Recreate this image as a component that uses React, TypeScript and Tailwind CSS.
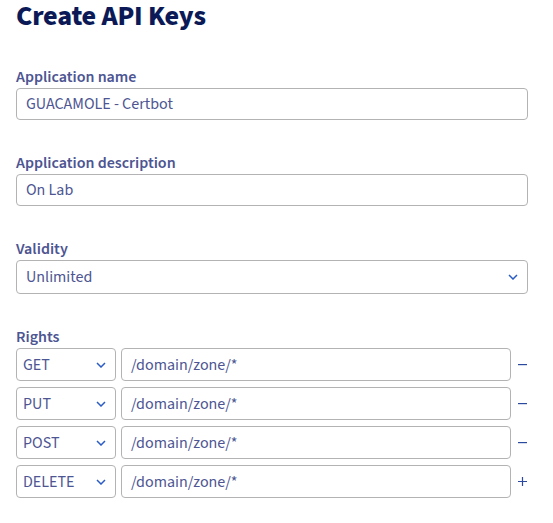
import React from "react";

function Chevron() {
  return (
    <svg width="10" height="6" viewBox="0 0 10 6" fill="none">
      <path d="M1 1l4 4 4-4" stroke="#2a5cc4" strokeWidth="1.5" />
    </svg>
  );
}

function Label({ children }: { children: React.ReactNode }) {
  return <label className="mb-[2px] text-[16px] font-semibold leading-[18px] text-[#4d5592]">{children}</label>;
}

function Field({ label, value }: { label: string; value: string }) {
  return (
    <div className="flex flex-col">
      <Label>{label}</Label>
      <div className="flex h-[32px] w-[512px] items-center rounded-[4px] border border-[#b3b3b3] px-[9px] text-[16px] text-[#4d5592]">
        {value}
      </div>
    </div>
  );
}

const rights = [
  { method: "GET", last: false },
  { method: "PUT", last: false },
  { method: "POST", last: false },
  { method: "DELETE", last: true },
];

export default function App() {
  return (
    <div className="h-[523px] w-[553px] bg-white pl-4 font-['Source_Sans_3','Lato',sans-serif]">
      <h1 className="text-[28px] font-extrabold leading-[32px] tracking-[-0.2px] text-[#0b1a57]">Create API Keys</h1>
      <div className="mt-[36px] flex flex-col gap-[34px]">
        <Field label="Application name" value="GUACAMOLE - Certbot" />
        <Field label="Application description" value="On Lab" />
        <div className="flex flex-col">
          <Label>Validity</Label>
          <div className="flex h-[34px] w-[512px] items-center justify-between rounded-[4px] border border-[#b3b3b3] pl-[9px] pr-[9px] text-[16px] text-[#4d5592]">
            <span>Unlimited</span>
            <Chevron />
          </div>
        </div>
        <div className="flex flex-col">
          <Label>Rights</Label>
          <div className="flex flex-col gap-[6px]">
            {rights.map((r) => (
              <div key={r.method} className="flex items-center">
                <div className="flex h-[33px] w-[100px] items-center justify-between rounded-[4px] border border-[#b3b3b3] pl-[6px] pr-[9px] text-[16px] text-[#4d5592]">
                  <span>{r.method}</span>
                  <Chevron />
                </div>
                <div className="ml-[5px] flex h-[33px] w-[390px] items-center rounded-[4px] border border-[#b3b3b3] px-[9px] text-[16px] text-[#4d5592]">
                  /domain/zone/*
                </div>
                <div className="ml-[7px] flex w-[9px] justify-center">
                  {r.last ? (
                    <svg width="9" height="9" viewBox="0 0 9 9">
                      <path d="M4.5 0v9M0 4.5h9" stroke="#2b4a9f" strokeWidth="1.2" />
                    </svg>
                  ) : (
                    <svg width="9" height="2" viewBox="0 0 9 2">
                      <rect width="9" height="1.2" fill="#2b4a9f" />
                    </svg>
                  )}
                </div>
              </div>
            ))}
          </div>
        </div>
      </div>
    </div>
  );
}
